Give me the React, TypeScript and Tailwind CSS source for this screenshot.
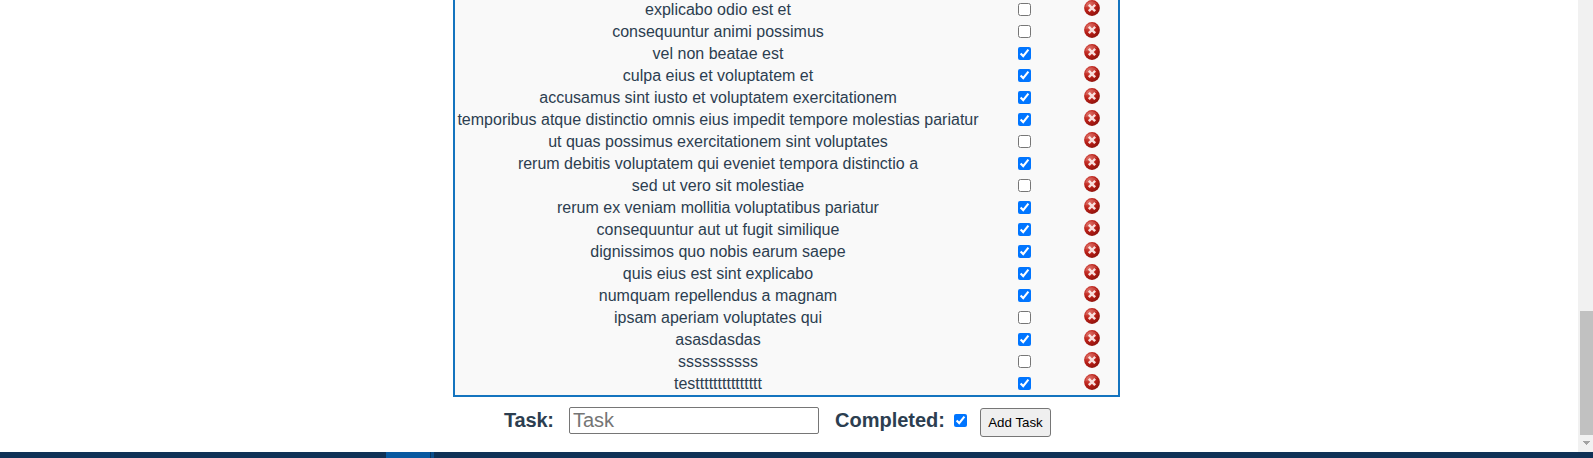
type Todo = { title: string; done: boolean };

const todos: Todo[] = [
  { title: "explicabo odio est et", done: false },
  { title: "consequuntur animi possimus", done: false },
  { title: "vel non beatae est", done: true },
  { title: "culpa eius et voluptatem et", done: true },
  { title: "accusamus sint iusto et voluptatem exercitationem", done: true },
  { title: "temporibus atque distinctio omnis eius impedit tempore molestias pariatur", done: true },
  { title: "ut quas possimus exercitationem sint voluptates", done: false },
  { title: "rerum debitis voluptatem qui eveniet tempora distinctio a", done: true },
  { title: "sed ut vero sit molestiae", done: false },
  { title: "rerum ex veniam mollitia voluptatibus pariatur", done: true },
  { title: "consequuntur aut ut fugit similique", done: true },
  { title: "dignissimos quo nobis earum saepe", done: true },
  { title: "quis eius est sint explicabo", done: true },
  { title: "numquam repellendus a magnam", done: true },
  { title: "ipsam aperiam voluptates qui", done: false },
  { title: "asasdasdas", done: true },
  { title: "ssssssssss", done: false },
  { title: "tes" + "t".repeat(15), done: true },
];

function DeleteIcon() {
  return (
    <svg viewBox="0 0 16 16" className="block h-4 w-4">
      <circle cx="8" cy="8" r="7.9" fill="url(#ball)" />
      <path d="M1.2 7.4A6.9 6.9 0 0 1 13.6 4C10 4.4 5.5 5.6 1.2 7.4Z" fill="#fff" opacity="0.14" />
      <path d="M5.7 5.7l4.6 4.6M10.3 5.7l-4.6 4.6" stroke="#fbe9e7" strokeWidth="2.5" strokeLinecap="square" opacity="0.95" />
    </svg>
  );
}

function Row({ todo }: { todo: Todo }) {
  return (
    <li className="flex h-[22px]">
      <span className="w-[526px] shrink-0 whitespace-nowrap text-center leading-[22px]">{todo.title}</span>
      <span className="w-[86px] shrink-0 pl-[37px] pt-1">
        <input type="checkbox" defaultChecked={todo.done} className="m-0 block h-[13px] w-[13px]" />
      </span>
      <button aria-label="Delete" className="ml-[17px] mt-px h-4 w-4">
        <DeleteIcon />
      </button>
    </li>
  );
}

export default function App() {
  return (
    <div className="flex h-[458px] flex-col overflow-hidden bg-white font-['Liberation_Sans',Arial,sans-serif] text-[#2c3e50]">
      <svg className="absolute h-0 w-0">
        <defs>
          <radialGradient id="ball" cx="0.32" cy="0.28" r="0.8">
            <stop offset="0" stopColor="#dc5a50" />
            <stop offset="0.5" stopColor="#bb2018" />
            <stop offset="1" stopColor="#8c120c" />
          </radialGradient>
        </defs>
      </svg>
      <div className="flex h-[452px] shrink-0">
        <main className="w-[1578px] pl-[453px]">
          <ul className="-mt-px w-[667px] border-2 border-t-0 border-[#1474bf] bg-[#f9f9f9] text-base">
            {todos.map((t) => (
              <Row key={t.title} todo={t} />
            ))}
          </ul>
          <form className="flex items-start pl-[51px] text-xl">
            <label className="mt-2 w-[65px] font-bold leading-[30px] tracking-[-0.2px]">Task:</label>
            <input
              placeholder="Task"
              className="mt-2.5 h-[27px] w-[250px] rounded-[2px] border border-[#767676] bg-white px-[3px] text-xl leading-6 placeholder:text-[#757575]"
            />
            <label className="ml-4 mt-2 w-[119px] font-bold leading-[30px]">Completed:</label>
            <input type="checkbox" defaultChecked className="m-0 mt-[17px] h-[13px] w-[13px]" />
            <button
              type="button"
              className="ml-[13px] mt-[11px] h-[29px] w-[71px] whitespace-nowrap rounded-[3px] border border-[#767676] bg-[#efefef] text-[13.333px] leading-[27px] text-black"
            >
              Add Task
            </button>
          </form>
        </main>
        <aside className="flex w-[15px] flex-col bg-[#f1f1f1] pl-0.5 pt-[311px]">
          <div className="h-[124px] bg-[#c1c1c1]" />
          <svg viewBox="0 0 7 4" className="ml-[3px] mt-1.5 h-1 w-[7px]" shapeRendering="crispEdges">
            <path d="M0 0h7v1H6v1H5v1H4v1H3V3H2V2H1V1H0z" fill="#a3a3a3" />
          </svg>
        </aside>
      </div>
      <footer className="flex h-1.5 shrink-0 bg-[#0f3156] pl-[386px]">
        <div className="w-11 bg-[#0859a0]" />
        <div className="w-px bg-[#0b3560]" />
        <div className="w-[3px] bg-[#0a4d8b]" />
      </footer>
    </div>
  );
}
